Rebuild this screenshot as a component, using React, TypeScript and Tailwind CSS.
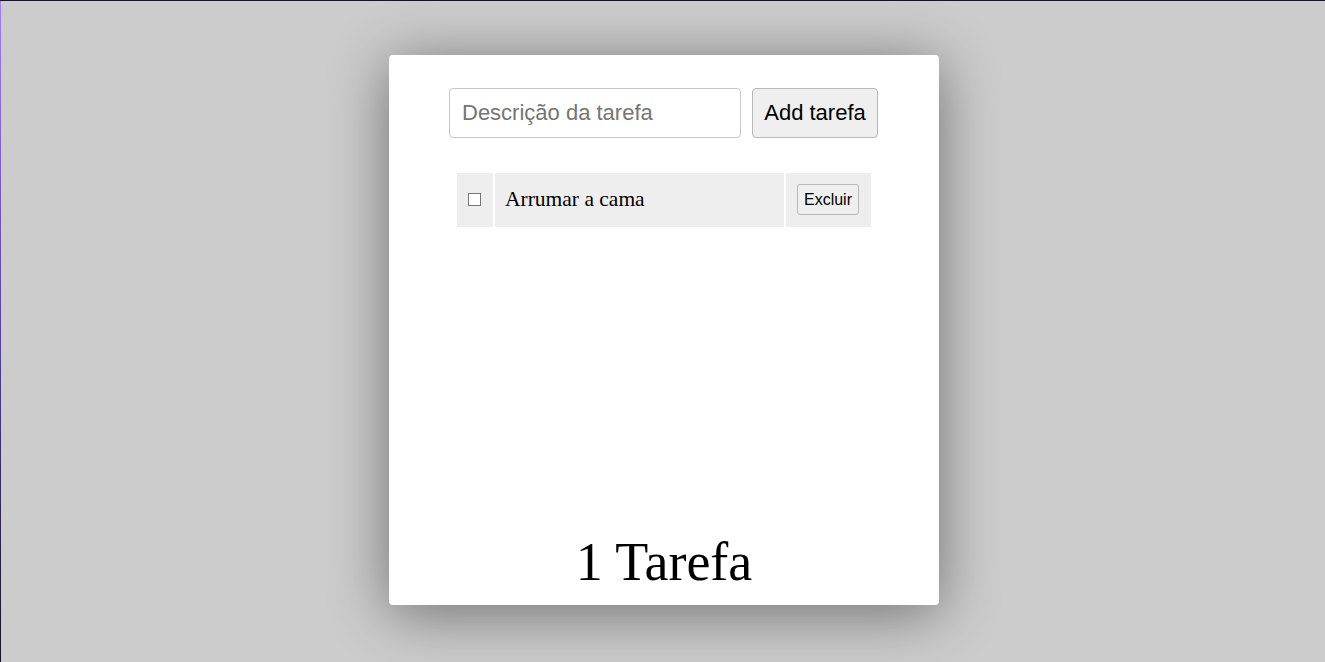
import { useState } from "react";

type Task = { id: number; text: string; done: boolean };

export default function App() {
  const [tasks, setTasks] = useState<Task[]>([{ id: 1, text: "Arrumar a cama", done: false }]);
  const [draft, setDraft] = useState("");

  const add = () => {
    if (!draft.trim()) return;
    setTasks([...tasks, { id: Date.now(), text: draft.trim(), done: false }]);
    setDraft("");
  };

  return (
    <div className="flex h-[662px] w-full bg-[#cccccc] border-t border-[#15122b]">
      <div className="w-px h-full bg-gradient-to-b from-[#a57cff] via-[#5a3f9e] to-[#141226]" />
      <div className="flex flex-1 items-center justify-center pb-[4px] pl-[2px]">
        <div className="flex h-[550px] w-[550px] flex-col items-center rounded-[4px] bg-white pt-[33px] shadow-[0_8px_60px_rgba(0,0,0,0.45)]">
          <div className="ml-[60px] flex gap-[11px] self-start">
            <input
              value={draft}
              onChange={(e) => setDraft(e.target.value)}
              placeholder="Descrição da tarefa"
              className="h-[50px] w-[292px] rounded-[4px] border border-[#c8c8c8] px-[12px] font-['Liberation_Sans',Arial,sans-serif] text-[22px] text-black outline-none placeholder:text-[#757575]"
            />
            <button
              onClick={add}
              className="h-[50px] w-[126px] rounded-[4px] border border-[#b8b8b8] bg-[#efefef] font-['Liberation_Sans',Arial,sans-serif] text-[22px] text-black"
            >
              Add tarefa
            </button>
          </div>

          <table className="mt-[33px] w-[418px] border-separate border-spacing-[2px]">
            <tbody>
              {tasks.map((t) => (
                <tr key={t.id}>
                  <td className="h-[54px] w-[36px] bg-[#eeeeee] pl-[11px] text-left align-middle">
                    <input
                      type="checkbox"
                      checked={t.done}
                      onChange={() =>
                        setTasks(tasks.map((x) => (x.id === t.id ? { ...x, done: !x.done } : x)))
                      }
                      className="m-0 block h-[13px] w-[13px] appearance-none border border-[#767676] bg-white"
                    />
                  </td>
                  <td className="h-[54px] bg-[#eeeeee] pl-[10px] align-middle font-['Liberation_Serif','Times_New_Roman',serif] text-[21.5px] text-black">
                    {t.text}
                  </td>
                  <td className="h-[54px] w-[85px] bg-[#eeeeee] pl-[11px] align-middle">
                    <button
                      onClick={() => setTasks(tasks.filter((x) => x.id !== t.id))}
                      className="h-[31px] w-[62px] rounded-[3px] border border-[#b8b8b8] bg-[#efefef] font-['Liberation_Sans',Arial,sans-serif] text-[16px] text-black"
                    >
                      Excluir
                    </button>
                  </td>
                </tr>
              ))}
            </tbody>
          </table>

          <div className="mt-auto pb-[12px] font-['Liberation_Serif','Times_New_Roman',serif] text-[54px] leading-[61px] text-black">
            {tasks.length} {tasks.length === 1 ? "Tarefa" : "Tarefas"}
          </div>
        </div>
      </div>
    </div>
  );
}
